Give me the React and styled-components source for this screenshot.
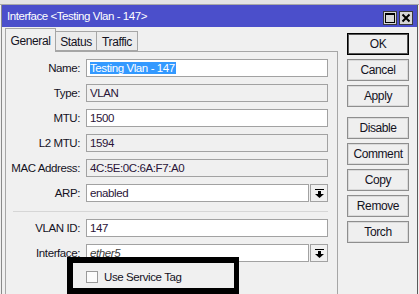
import { Fragment } from 'react'
import styled, { createGlobalStyle } from 'styled-components'

const font = `"Liberation Sans", Arial, sans-serif`

const Global = createGlobalStyle`
  html, body {
    margin: 0;
    background: #f0f0f0;
    overflow: hidden;
  }
  body {
    font-family: ${font};
    font-size: 11.5px;
    letter-spacing: -0.4px;
    color: #14121e;
  }
`

const Screen = styled.div`
  position: relative;
  width: 419px;
  height: 294px;
  overflow: hidden;
`

const TopEdge = styled.div`
  height: 4px;
  background: #e4e4e4;
  border-bottom: 1px solid #a8a8a8;
`

const Window = styled.div`
  margin-left: 1px;
  width: 417px;
  box-sizing: border-box;
  border-left: 1px solid #8a8a8a;
  border-right: 1px solid #5a5a5a;
  height: 320px;
  background: #f0f0f0;
`

const TitleBar = styled.div`
  height: 22px;
  background: #4b4fcb;
  color: #fff;
  display: flex;
  align-items: flex-end;
  justify-content: space-between;
  padding: 0 4px 2px 5px;
  box-sizing: border-box;
`

const Title = styled.span`
  font-size: 11.5px;
  letter-spacing: -0.45px;
  line-height: 15px;
  padding-bottom: 1px;
`

const TitleButtons = styled.div`
  display: flex;
  gap: 2px;
`

const TitleButton = styled.div`
  width: 14px;
  height: 14px;
  box-sizing: border-box;
  border: 1px solid #3a3a3a;
  background: #d6d6d6;
  display: flex;
  align-items: center;
  justify-content: center;
`

const Body = styled.div`
  display: flex;
  padding-left: 3px;
`

const Left = styled.div`
  width: 333px;
  display: flex;
  flex-direction: column;
`

const TabStrip = styled.div`
  display: flex;
  align-items: flex-end;
  height: 23px;
  margin-top: 2px;
  margin-bottom: -1px;
  position: relative;
  z-index: 1;
`

const Tab = styled.div`
  box-sizing: border-box;
  height: ${p => (p.$active ? '24px' : '20px')};
  padding-top: ${p => (p.$active ? '4px' : '2px')};
  width: ${p => p.$w}px;
  border: 1px solid #a6a6a6;
  border-bottom: ${p => (p.$active ? 'none' : '1px solid #a6a6a6')};
  border-left: ${p => (p.$first || p.$active ? '1px solid #a6a6a6' : 'none')};
  background: ${p => (p.$active ? '#f0f0f0' : '#ececec')};
  font-size: 12px;
  line-height: 16px;
  margin-bottom: ${p => (p.$active ? '0' : '1px')};
  text-align: center;
`

const Panel = styled.div`
  border: 1px solid #a6a6a6;
  background: #f0f0f0;
  padding: 7px 9px 0 0;
  height: 260px;
`

const Form = styled.div`
  display: grid;
  grid-template-columns: 74px 1fr;
  column-gap: 6px;
  row-gap: 7px;
  align-items: center;
`

const Label = styled.label`
  text-align: right;
  line-height: 18px;
  white-space: nowrap;
`

const Field = styled.div`
  display: flex;
  gap: 1px;
`

const Input = styled.div`
  flex: 1;
  height: 18px;
  box-sizing: border-box;
  border: 1px solid #a2a2a2;
  box-shadow: inset 0 0 0 1px ${p => (p.$ro ? '#f0f0f0' : '#fff')};
  background: ${p => (p.$ro ? '#f0f0f0' : '#fff')};
  padding: 0 3px;
  line-height: 16px;
  color: ${p => (p.$muted ? '#3a3a3a' : '#2a1438')};
  font-style: ${p => (p.$italic ? 'italic' : 'normal')};
  white-space: nowrap;
  overflow: hidden;
`

const Selected = styled.span`
  background: #3399ff;
  color: #fff;
  padding: 0 1px 0 0;
`

const DropButton = styled.div`
  width: 18px;
  height: 18px;
  box-sizing: border-box;
  border: 1px solid #a2a2a2;
  background: #f0f0f0;
  display: flex;
  align-items: center;
  justify-content: center;
`

const Separator = styled.div`
  grid-column: 1 / -1;
  height: 1px;
  margin: 2px 0 0 7px;
  background: #d6d6d6;
`

const CheckRow = styled.div`
  grid-column: 2;
  display: flex;
  align-items: center;
  gap: 6px;
  height: 16px;
`

const Check = styled.span`
  width: 12px;
  height: 12px;
  box-sizing: border-box;
  border: 1px solid #9a9a9a;
  background: #fbfbfb;
`

const Buttons = styled.div`
  display: flex;
  flex-direction: column;
  gap: 4px;
  margin-left: 9px;
  padding-top: 6px;
`

const Button = styled.div`
  width: 62px;
  height: 22px;
  box-sizing: border-box;
  border: 1px solid ${p => (p.$default ? '#000' : '#8e8e8e')};
  box-shadow: inset 0 0 0 1px ${p => (p.$default ? '#555' : '#dadada')};
  background: #efefef;
  display: flex;
  align-items: center;
  justify-content: center;
  font-size: 12px;
  line-height: 16px;
  margin-top: ${p => (p.$spaced ? '6px' : '0')};
`

const Highlight = styled.div`
  position: absolute;
  left: 67px;
  top: 257px;
  width: 172px;
  height: 37px;
  box-sizing: border-box;
  border: 6px solid #000;
  border-right-width: 5px;
  pointer-events: none;
  z-index: 5;
`

const DropIcon = () => (
  <svg width="9" height="9" viewBox="0 0 9 9">
    <rect x="0" y="0" width="9" height="1" fill="#000" />
    <rect x="3" y="2" width="3" height="3" fill="#000" />
    <polygon points="0,5 9,5 4.5,9" fill="#000" />
  </svg>
)

const rows = [
  { label: 'Name:', value: <Selected>Testing Vlan - 147</Selected> },
  { label: 'Type:', value: 'VLAN', ro: true },
  { label: 'MTU:', value: '1500' },
  { label: 'L2 MTU:', value: '1594', ro: true },
  { label: 'MAC Address:', value: '4C:5E:0C:6A:F7:A0', ro: true },
  { label: 'ARP:', value: 'enabled', drop: true },
]

const App = () => {
  return (
    <Screen>
      <Global />
      <TopEdge />
      <Window>
        <TitleBar>
          <Title>Interface &lt;Testing Vlan - 147&gt;</Title>
          <TitleButtons>
            <TitleButton>
              <svg width="10" height="10" viewBox="0 0 10 10">
                <rect x="0.5" y="0.5" width="9" height="9" fill="none" stroke="#000" />
                <rect x="0" y="0" width="10" height="2" fill="#000" />
              </svg>
            </TitleButton>
            <TitleButton>
              <svg width="10" height="10" viewBox="0 0 10 10">
                <path d="M1.5 1.5 L8.5 8.5 M8.5 1.5 L1.5 8.5" stroke="#000" strokeWidth="2" />
              </svg>
            </TitleButton>
          </TitleButtons>
        </TitleBar>
        <Body>
          <Left>
            <TabStrip>
              <Tab $active $first $w={51}>General</Tab>
              <Tab $w={41}>Status</Tab>
              <Tab $w={41}>Traffic</Tab>
            </TabStrip>
            <Panel>
              <Form>
                {rows.map(r => (
                  <Fragment key={r.label}>
                    <Label>{r.label}</Label>
                    <Field>
                      <Input $ro={r.ro}>{r.value}</Input>
                      {r.drop && <DropButton><DropIcon /></DropButton>}
                    </Field>
                  </Fragment>
                ))}
                <Separator />
                <Label>VLAN ID:</Label>
                <Field>
                  <Input>147</Input>
                </Field>
                <Label>Interface:</Label>
                <Field>
                  <Input $italic $muted>ether5</Input>
                  <DropButton><DropIcon /></DropButton>
                </Field>
                <CheckRow>
                  <Check />
                  <span>Use Service Tag</span>
                </CheckRow>
              </Form>
            </Panel>
          </Left>
          <Buttons>
            <Button $default>OK</Button>
            <Button>Cancel</Button>
            <Button>Apply</Button>
            <Button $spaced>Disable</Button>
            <Button>Comment</Button>
            <Button>Copy</Button>
            <Button>Remove</Button>
            <Button>Torch</Button>
          </Buttons>
        </Body>
      </Window>
      <Highlight />
    </Screen>
  )
}

export default App
